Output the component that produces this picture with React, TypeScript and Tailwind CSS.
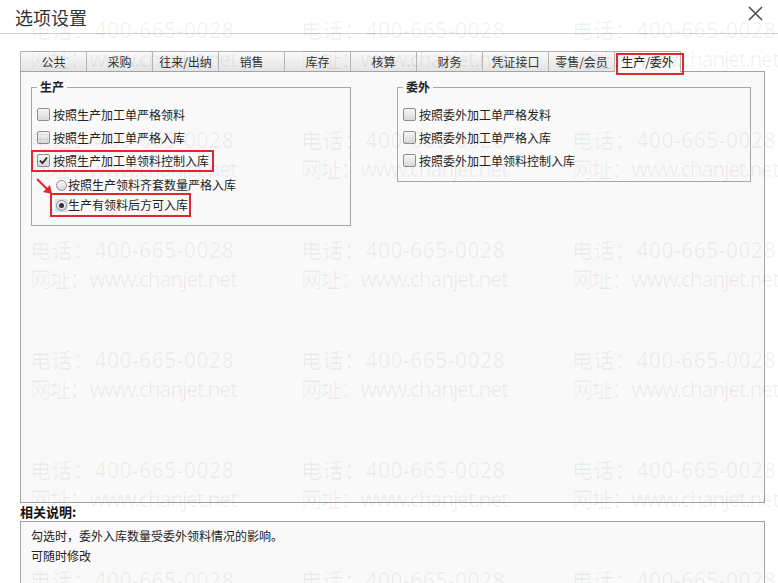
import React from "react";

const FONT = '"Noto Sans CJK SC", "Noto Sans", sans-serif';

function CheckBox({ checked = false }: { checked?: boolean }) {
  return (
    <span className="relative flex h-[13px] w-[13px] shrink-0 items-center justify-center rounded-[2px] border border-[#8e8e8e] bg-gradient-to-b from-[#f6f6f6] to-[#dadada]">
      {checked && (
        <svg width="9" height="9" viewBox="0 0 9 9">
          <path d="M1 4.6 L3.5 7.2 L8 1.5" fill="none" stroke="#2a2a2a" strokeWidth="1.8" />
        </svg>
      )}
    </span>
  );
}

function Radio({ checked = false }: { checked?: boolean }) {
  return (
    <span className={"flex h-[13px] w-[13px] shrink-0 items-center justify-center " + (checked ? "bg-[#cfe3f7]" : "")}>
      <span className="flex h-[11px] w-[11px] items-center justify-center rounded-full border border-[#8e8e8e] bg-gradient-to-b from-[#f6f6f6] to-[#d8d8d8]">
        {checked && <span className="h-[5px] w-[5px] rounded-full bg-[#333]" />}
      </span>
    </span>
  );
}

function Row({ children, checked }: { children: React.ReactNode; checked?: boolean }) {
  return (
    <div className="flex h-[23px] items-center gap-[3px] text-[12px] leading-[16px] text-[#222]">
      <CheckBox checked={checked} />
      <span>{children}</span>
    </div>
  );
}

const tabs = ["公共", "采购", "往来/出纳", "销售", "库存", "核算", "财务", "凭证接口", "零售/会员", "生产/委外"];

export default function App() {
  const cols = [30, 301, 572];
  const rows = [0, 1, 2, 3, 4, 5];
  return (
    <div
      className="relative h-[583px] w-[778px] overflow-hidden bg-white text-[#222]"
      style={{ fontFamily: FONT }}
    >
      {/* Header */}
      <div className="flex h-[34px] items-start justify-between border-b border-[#d4d4d4] bg-white">
        <div className="pl-[15px] pt-[5px] text-[18px] leading-[24px] text-[#333]">选项设置</div>
        <div className="pr-[15px] pt-[6px]">
          <svg width="15" height="15" viewBox="0 0 15 15">
            <path d="M1 1 L14 14 M14 1 L1 14" stroke="#4a4a4a" strokeWidth="1.5" />
          </svg>
        </div>
      </div>

      {/* Body */}
      <div className="flex flex-col pl-[20px] pr-[13px] pt-[17px]">
        {/* Tabs */}
        <div className="relative z-10 flex h-[20px] items-end">
          {tabs.map((t, i) => {
            const active = i === tabs.length - 1;
            return (
              <div
                key={t}
                className={
                  active
                    ? "relative -mb-px -ml-px flex h-[21px] w-[67px] items-start justify-center border border-b-0 border-[#b5b5b5] bg-[#f9f9f9] pt-[2px] text-[12px] leading-[16px] text-[#222]"
                    : "-ml-px flex h-[20px] w-[67px] items-center justify-center border border-b-0 border-[#b5b5b5] bg-gradient-to-b from-[#fafafa] to-[#e4e4e4] text-[12px] leading-[16px] text-[#333] first:ml-0"
                }
              >
                {t}
                {active && (
                  <span className="absolute left-[1px] top-[1px] h-[22px] w-[68px] border-2 border-[#e2282e]" />
                )}
              </div>
            );
          })}
        </div>

        {/* Panel */}
        <div className="flex h-[432px] items-start gap-[46px] border border-[#a3a3a3] bg-[#f9f9f9] pl-[10px] pt-[7px]">
          <fieldset className="w-[320px] border border-[#a8a8a8] px-[5px] pb-[10px] pt-[8px]">
            <legend className="px-[3px] text-[12px] font-bold leading-[16px] text-[#222]">生产</legend>
            <Row>按照生产加工单严格领料</Row>
            <Row>按照生产加工单严格入库</Row>
            <div className="relative">
              <Row checked>按照生产加工单领料控制入库</Row>
              <span className="absolute -left-[6px] top-[1px] h-[22px] w-[183px] border-2 border-[#e2282e]" />
            </div>
            <div className="mt-[3px] flex h-[20px] items-center pl-[18px] text-[12px] leading-[16px]">
              <Radio />
              <span>按照生产领料齐套数量严格入库</span>
            </div>
            <div className="relative flex h-[20px] items-center pl-[18px] text-[12px] leading-[16px]">
              <Radio checked />
              <span>生产有领料后方可入库</span>
              <span className="absolute left-[13px] -top-[2px] h-[24px] w-[141px] border-2 border-[#e2282e]" />
            </div>
          </fieldset>

          <fieldset className="w-[354px] border border-[#a8a8a8] px-[5px] pb-[9px] pt-[8px]">
            <legend className="px-[3px] text-[12px] font-bold leading-[16px] text-[#222]">委外</legend>
            <Row>按照委外加工单严格发料</Row>
            <Row>按照委外加工单严格入库</Row>
            <Row>按照委外加工单领料控制入库</Row>
          </fieldset>
        </div>

        {/* Description */}
        <div className="h-[18px] text-[13px] font-bold leading-[18px] text-[#111]">相关说明:</div>
        <div className="h-[80px] border border-[#a3a3a3] bg-[#f9f9f9] pl-[10px] pt-[4px] text-[12px] leading-[20px] text-[#222]">
          <div>勾选时，委外入库数量受委外领料情况的影响。</div>
          <div>可随时修改</div>
        </div>
      </div>

      {/* Red arrow annotation */}
      <svg className="pointer-events-none absolute left-[35px] top-[177px]" width="20" height="20" viewBox="0 0 20 20">
        <path d="M2 2 L12 12" stroke="#e2282e" strokeWidth="2" />
        <path d="M8 15 L17 17 L15 8 Z" fill="#e2282e" />
      </svg>

      {/* Watermark */}
      <div className="pointer-events-none absolute inset-0 z-20">
        {rows.map((r) =>
          cols.map((c) => (
            <div
              key={r + "-" + c}
              className="absolute whitespace-nowrap text-[21px] leading-[30px] text-[rgba(0,0,0,0.06)]"
              style={{ left: c, top: 15 + r * 110, fontFamily: '"Noto Sans", "Noto Sans CJK SC", sans-serif' }}
            >
              <div className="tracking-[0.5px]">电话：400-665-0028</div>
              <div className="-mt-[1px] tracking-[-1.2px]">网址：www.chanjet.net</div>
            </div>
          ))
        )}
      </div>
    </div>
  );
}
